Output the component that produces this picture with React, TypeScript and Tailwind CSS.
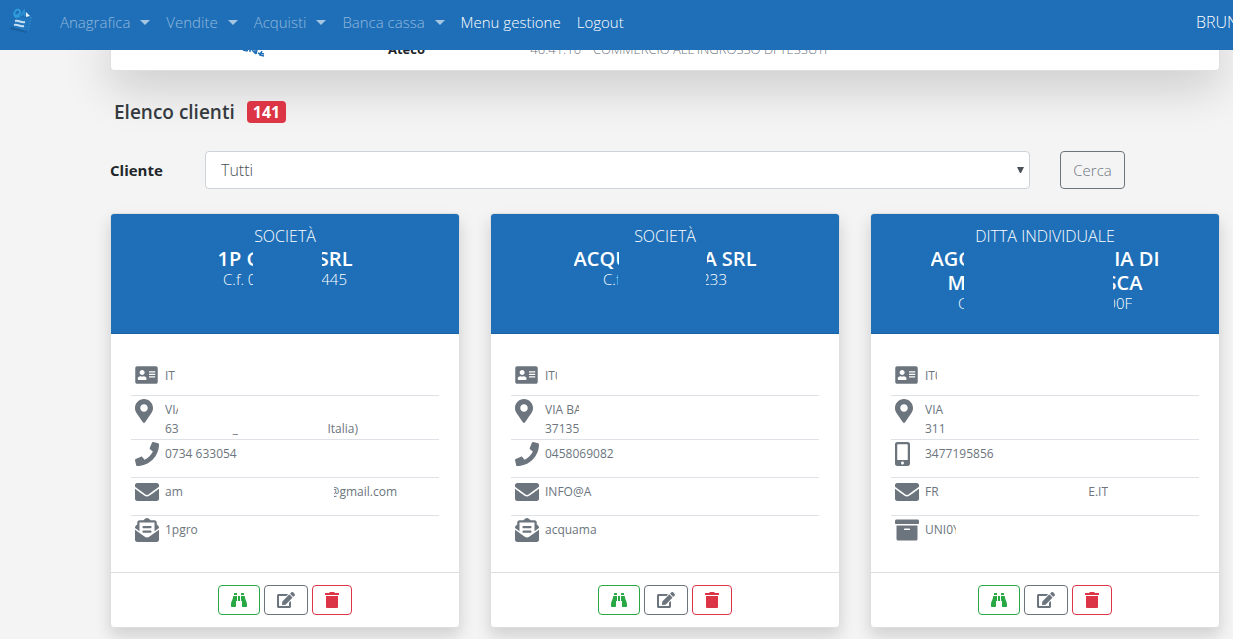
import { ReactNode } from 'react';
import {
  FaAddressCard,
  FaArchive,
  FaBinoculars,
  FaEdit,
  FaEnvelope,
  FaEnvelopeOpenText,
  FaMapMarkerAlt,
  FaMobileAlt,
  FaPhone,
} from 'react-icons/fa';

// Visible piece of a blanked out line, cut at a pixel width.
// A piece that follows a gap keeps its right end.
interface Piece {
  text: string;
  width: number;
  gap?: number;
}

interface Client {
  type: string;
  name: Piece[][];
  code: Piece[];
  vat: Piece[];
  address: Piece[][];
  phone: string;
  mobile?: boolean;
  email: Piece[];
  channel: Piece[];
  archive?: boolean;
}

const MENUS = ['Anagrafica', 'Vendite', 'Acquisti', 'Banca cassa'];

const CLIENTS: Client[] = [
  {
    type: 'SOCIETÀ',
    name: [[{ text: '1P G', width: 35 }, { text: 'SRL', width: 31, gap: 69 }]],
    code: [{ text: 'C.f. 0', width: 30 }, { text: '445', width: 25, gap: 69 }],
    vat: [{ text: 'IT', width: 11 }],
    address: [
      [{ text: 'VIA', width: 13 }],
      [{ text: '63', width: 14 }, { text: '_', width: 6, gap: 53 }, { text: 'Italia)', width: 34, gap: 86 }],
    ],
    phone: '0734 633054',
    email: [{ text: 'am', width: 19 }, { text: '@gmail.com', width: 63, gap: 150 }],
    channel: [{ text: '1pgro', width: 34 }],
  },
  {
    type: 'SOCIETÀ',
    name: [[{ text: 'ACQU', width: 45 }, { text: 'A SRL', width: 50, gap: 88 }]],
    code: [{ text: 'C.f', width: 15 }, { text: '233', width: 21, gap: 88 }],
    vat: [{ text: 'IT0', width: 12 }],
    address: [[{ text: 'VIA BA', width: 34 }], [{ text: '37135', width: 36 }]],
    phone: '0458069082',
    email: [{ text: 'INFO@A', width: 50 }],
    channel: [{ text: 'acquama', width: 55 }],
  },
  {
    type: 'DITTA INDIVIDUALE',
    name: [
      [{ text: 'AGO', width: 33 }, { text: 'IA DI', width: 46, gap: 150 }],
      [{ text: 'M', width: 16 }, { text: 'SCA', width: 30, gap: 149 }],
    ],
    code: [{ text: 'C', width: 6 }, { text: '00F', width: 18, gap: 150 }],
    vat: [{ text: 'IT0', width: 12 }],
    address: [[{ text: 'VIA', width: 21 }], [{ text: '311', width: 22 }]],
    phone: '3477195856',
    mobile: true,
    email: [{ text: 'FR', width: 15 }, { text: 'E.IT', width: 23, gap: 145 }],
    channel: [{ text: 'UNI0Y', width: 31 }],
    archive: true,
  },
];

function MaskedText({ pieces, center }: { pieces: Piece[]; center?: boolean }) {
  return (
    <span className={`flex whitespace-nowrap ${center ? 'justify-center' : ''}`}>
      {pieces.map((piece) => (
        <span
          key={piece.text}
          className={`flex overflow-hidden ${piece.gap ? 'justify-end' : ''}`}
          style={{ width: piece.width, marginLeft: piece.gap }}
        >
          <span className="whitespace-pre">{piece.text}</span>
        </span>
      ))}
    </span>
  );
}

function Row({ icon, children }: { icon: ReactNode; children: ReactNode }) {
  return (
    <li className="flex min-h-[38px] border-b border-[#dee2e6] px-1 last:border-b-0">
      <span className="w-[30px] shrink-0 pt-0.5">{icon}</span>
      <div className="pt-1">{children}</div>
    </li>
  );
}

function ClientCard({ client }: { client: Client }) {
  return (
    <article className="flex flex-col rounded border border-[#dfdfdf] bg-white shadow-[0_8px_16px_rgba(0,0,0,0.15)]">
      <header className="h-[120px] rounded-t-[3px] border-b border-black/12 bg-[#1e6fb8] px-5 pt-3 text-center text-white">
        <p className="leading-[21px]">{client.type}</p>
        <h2 className="text-xl leading-6 font-semibold">
          {client.name.map((line) => (
            <MaskedText key={line[0].text} pieces={line} center />
          ))}
        </h2>
        <div className="text-[15px] leading-[17px]">
          <MaskedText pieces={client.code} center />
        </div>
      </header>
      <ul className="flex-1 px-5 pt-[22px] pb-[18px] text-xs leading-[19px] font-normal text-[#6c757d]">
        <li className="flex h-10 items-center border-b border-[#dee2e6] px-1">
          <FaAddressCard className="mr-[7px] mb-0.5 w-[23px] shrink-0" size={20} />
          <MaskedText pieces={client.vat} />
        </li>
        <Row icon={<FaMapMarkerAlt className="mt-px w-[18px]" size={24} />}>
          <div className="pb-px">
            {client.address.map((line) => (
              <MaskedText key={line[0].text} pieces={line} />
            ))}
          </div>
        </Row>
        <Row icon={client.mobile ? <FaMobileAlt className="w-[15px]" size={24} /> : <FaPhone size={24} />}>
          {client.phone}
        </Row>
        <Row icon={<FaEnvelope size={24} />}>
          <MaskedText pieces={client.email} />
        </Row>
        <Row icon={client.archive ? <FaArchive size={24} /> : <FaEnvelopeOpenText size={24} />}>
          <MaskedText pieces={client.channel} />
        </Row>
      </ul>
      <footer className="flex justify-center gap-1 border-t border-[#dfdfdf] py-3">
        <button
          aria-label="Visualizza"
          className="flex h-[30px] w-[42px] items-center justify-center rounded border border-[#28a745] text-[#28a745]"
        >
          <FaBinoculars size={16} />
        </button>
        <button
          aria-label="Modifica"
          className="flex h-[30px] w-11 items-center justify-center rounded border border-[#6c757d] text-[#6c757d]"
        >
          <FaEdit className="w-[18px]" size={16} />
        </button>
        <button
          aria-label="Elimina"
          className="flex h-[30px] w-10 items-center justify-center rounded border border-[#dc3545] text-[#dc3545]"
        >
          {/* solid bin without the inner lines */}
          <svg width="14" height="16" viewBox="0 0 14 16" fill="currentColor" aria-hidden="true">
            <path d="M0 1h4l1-1h4l1 1h4v2H0zM1 4h12v11a1 1 0 0 1-1 1H2a1 1 0 0 1-1-1z" />
          </svg>
        </button>
      </footer>
    </article>
  );
}

function Logo() {
  return (
    <svg width="24" height="26" viewBox="0 0 24 26" fill="none" aria-hidden="true">
      <path d="M1 20l16 4-1 2L0 22z" fill="#1a5f9f" />
      <path d="M6 10l13 1-3 13-12-4z" fill="#2278be" />
      <path d="M5 8c4 1 7-3 4-5S2 7 6 10l4-1" stroke="#2f9bd8" strokeWidth="2" />
      <path d="M11 9l3-5 1 5" stroke="#2c8fcf" strokeWidth="2" />
      <path d="M16 5l4 4-4 1z" fill="#e8f3fb" />
      <path d="M5 14c4-1 6 2 10 1M4 18c4-1 6 2 10 1" stroke="#c5def2" strokeWidth="2" />
      <path d="M21 10l-3 13" stroke="#2a86c9" strokeWidth="2" strokeDasharray="2 1" />
    </svg>
  );
}

export default function App() {
  return (
    <div className="overflow-hidden bg-[#f4f4f4] font-['Open_Sans','Noto_Sans',sans-serif] font-light text-[#212529]">
      <nav className="fixed inset-x-0 top-0 z-10 flex h-[50px] items-center overflow-hidden bg-[#1e6fb8] pb-1.5 whitespace-nowrap text-white">
        <a href="#" aria-label="Home" className="mr-[26px] mb-1 ml-2.5">
          <Logo />
        </a>
        <div className="flex gap-4 text-[15px]">
          {MENUS.map((menu) => (
            <button key={menu} className="flex items-center gap-2.5 text-white/50">
              {menu}
              <span className="border-x-[5px] border-t-[5px] border-x-transparent border-t-white/60" />
            </button>
          ))}
          <a href="#">Menu gestione</a>
          <a href="#">Logout</a>
        </div>
        <span className="ml-auto w-[37px] overflow-hidden">BRUN</span>
      </nav>

      <main className="pt-5 pr-[13px] pb-3 pl-[110px]">
        <section className="grid grid-cols-12 rounded border border-[#dfdfdf] bg-white pt-[19px] pb-[11px] text-[13px] leading-[19px] shadow-[0_16px_48px_rgba(0,0,0,0.175)]">
          <div className="col-span-3 flex items-end justify-center pb-0.5">
            <svg className="ml-2" width="24" height="8" viewBox="0 0 24 8" fill="none" aria-hidden="true">
              <path
                d="M1 1l4 1 1-2M8 0v3M10 1l3 3v-4M15 1l-1 4M16 4l2 1M20 2l-2 4 4 1M18 4l4 1"
                stroke="#1e6fb8"
                strokeWidth="1.500"
              />
            </svg>
          </div>
          <b className="font-bold">Ateco</b>
          <span className="col-span-8 flex gap-3 pl-[50px] text-[#6c757d]">
            <span>46.41.10</span>
            <span>COMMERCIO ALL'INGROSSO DI TESSUTI</span>
          </span>
        </section>

        <h1 className="mt-[29px] flex items-center gap-3 pl-1 text-[19px] leading-6 font-semibold text-[#343a40]">
          Elenco clienti
          <span className="rounded bg-[#dc3545] px-1.5 text-base leading-[22px] font-bold text-white">141</span>
        </h1>

        <form className="mt-[27px] grid grid-cols-12 items-center gap-x-[30px]">
          <label htmlFor="cliente" className="text-[15px] font-bold">
            Cliente
          </label>
          <div className="relative col-span-9">
            <select
              id="cliente"
              className="h-[38px] w-full appearance-none rounded border border-[#ced4da] bg-white px-[15px] text-[#495057]"
            >
              <option>Tutti</option>
            </select>
            <svg className="absolute top-4 right-1.5" width="7" height="6" viewBox="0 0 7 6" aria-hidden="true">
              <path d="M0 0h7L4 6H3z" fill="#495057" />
            </svg>
          </div>
          <button
            type="button"
            className="col-span-2 h-[38px] w-[65px] rounded border border-[#6c757d] text-[15px] text-[#6c757d]"
          >
            Cerca
          </button>
        </form>

        <div className="mt-6 grid grid-cols-3 gap-[30px]">
          {CLIENTS.map((client) => (
            <ClientCard key={client.phone} client={client} />
          ))}
        </div>
      </main>
    </div>
  );
}
